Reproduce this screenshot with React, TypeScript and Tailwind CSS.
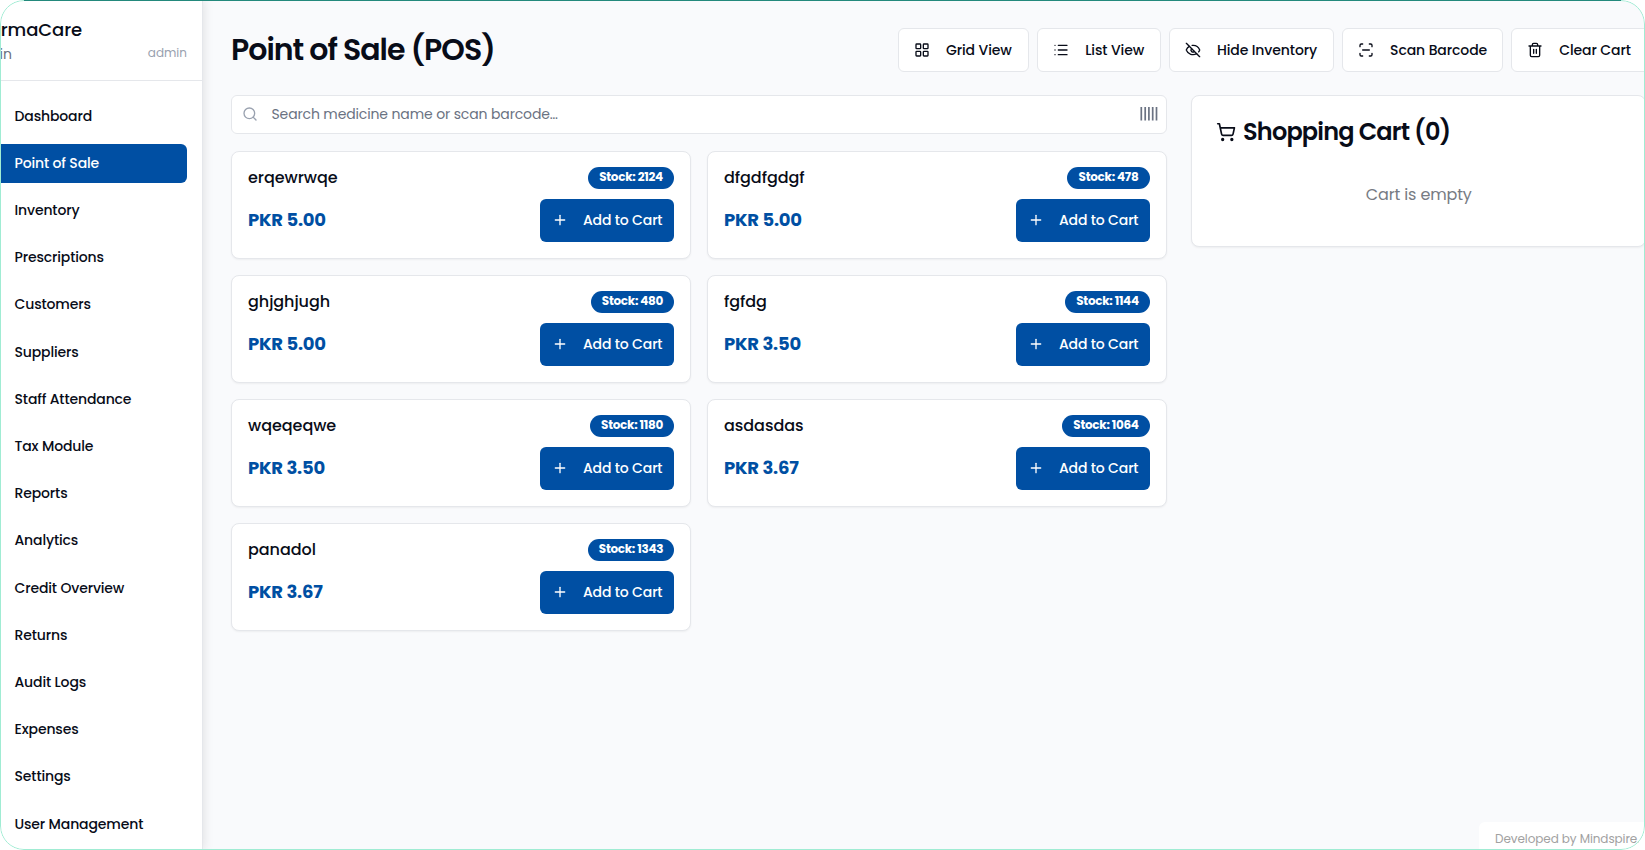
import React from "react";
import { LayoutGrid, List, EyeOff, Search, ShoppingCart, Plus } from "lucide-react";

const nav = [
  "Dashboard",
  "Point of Sale",
  "Inventory",
  "Prescriptions",
  "Customers",
  "Suppliers",
  "Staff Attendance",
  "Tax Module",
  "Reports",
  "Analytics",
  "Credit Overview",
  "Returns",
  "Audit Logs",
  "Expenses",
  "Settings",
  "User Management",
];

const products = [
  { name: "erqewrwqe", price: "5.00", stock: 2124, badge: "w-[86px]" },
  { name: "dfgdfgdgf", price: "5.00", stock: 478, badge: "w-[83px]" },
  { name: "ghjghjugh", price: "5.00", stock: 480, badge: "w-[83px]" },
  { name: "fgfdg", price: "3.50", stock: 1144, badge: "w-[85px]" },
  { name: "wqeqeqwe", price: "3.50", stock: 1180, badge: "w-[84px]" },
  { name: "asdasdas", price: "3.67", stock: 1064, badge: "w-[88px]" },
  { name: "panadol", price: "3.67", stock: 1343, badge: "w-[86px]" },
];

function ScanLine() {
  return (
    <svg width="16" height="16" viewBox="0 0 24 24" fill="none" stroke="currentColor" strokeWidth="2" strokeLinecap="round" strokeLinejoin="round">
      <path d="M3 7V5a2 2 0 0 1 2-2h2M17 3h2a2 2 0 0 1 2 2v2M21 17v2a2 2 0 0 1-2 2h-2M7 21H5a2 2 0 0 1-2-2v-2M7 12h10" />
    </svg>
  );
}

function TrashIcon() {
  return (
    <svg width="16" height="16" viewBox="0 0 24 24" fill="none" stroke="currentColor" strokeWidth="2" strokeLinecap="round" strokeLinejoin="round">
      <path d="M3 6h18M19 6v14a2 2 0 0 1-2 2H7a2 2 0 0 1-2-2V6M8 6V4a2 2 0 0 1 2-2h4a2 2 0 0 1 2 2v2M10 11v6M14 11v6" />
    </svg>
  );
}

function BarcodeBars() {
  return (
    <svg width="18" height="14" viewBox="0 0 18 14" fill="none" stroke="currentColor" strokeWidth="1.7" className="ml-auto text-gray-500">
      <path d="M1.3 0v13.5M5.2 0v13.5M8.9 0v13.5M12.7 0v13.5M16.5 0v13.5" />
    </svg>
  );
}

function ToolButton({ icon, label, width }: { icon: React.ReactNode; label: string; width: string }) {
  return (
    <button className={`flex h-[43.4px] shrink-0 items-center rounded-md border border-gray-200 bg-white pl-[15px] text-sm font-medium whitespace-nowrap ${width}`}>
      {icon}
      <span className="ml-4 tracking-[-0.1px]">{label}</span>
    </button>
  );
}

export default function App() {
  return (
    <div className="relative flex h-[850px] w-[1645px] overflow-hidden rounded-[24px] bg-[#f9fafc] font-['Poppins','Inter',sans-serif] text-[#080c18]">
      <aside className="z-10 flex w-[203px] shrink-0 flex-col border-r border-gray-200 bg-white shadow-[1px_0_10px_rgba(0,0,0,0.1)]">
        <header className="flex h-[81px] shrink-0 flex-col border-b border-gray-200 pt-[16px]">
          <div className="flex h-7 w-[82px] items-center justify-end text-lg font-medium tracking-[-0.1px]">rmaCare</div>
          <div className="flex h-5 items-center justify-between pr-[15px]">
            <span className="flex w-3 justify-end text-sm text-gray-500">in</span>
            <span className="pb-[2px] text-xs text-gray-400">admin</span>
          </div>
        </header>
        <nav className="flex flex-col gap-2 pt-[16px] pr-[15.5px]">
          {nav.map((label) => (
            <a
              key={label}
              className={`flex h-[39.2px] shrink-0 items-center rounded-r-md pb-[1.8px] pl-[14.5px] text-sm font-medium tracking-[-0.14px] ${label === "Point of Sale" ? "bg-[#004fa3] text-white" : ""}`}
            >
              {label}
            </a>
          ))}
        </nav>
      </aside>

      <main className="flex w-[1480px] shrink-0 flex-col pl-[28px]">
        <div className="flex pt-[28.3px]">
          <h1 className="flex h-[43px] w-[667px] items-center text-[30px] font-semibold tracking-[-1px] whitespace-nowrap">Point of Sale (POS)</h1>
          <div className="flex gap-[8.2px]">
            <ToolButton icon={<LayoutGrid size={16} />} label="Grid View" width="w-[131px]" />
            <ToolButton icon={<List size={16} />} label="List View" width="w-[123.5px]" />
            <ToolButton icon={<EyeOff size={16} />} label="Hide Inventory" width="w-[165px]" />
            <ToolButton icon={<ScanLine />} label="Scan Barcode" width="w-[161px]" />
            <ToolButton icon={<TrashIcon />} label="Clear Cart" width="w-[150px]" />
          </div>
        </div>

        <div className="mt-[23.3px] flex items-start gap-[23.5px]">
          <section className="w-[936px] shrink-0">
            <div className="flex h-[39px] items-center rounded-md border border-gray-200 bg-white pr-2 pl-[10px] text-gray-400">
              <Search size={16} />
              <span className="ml-[13.5px] pb-px text-sm tracking-[-0.13px] text-gray-500">Search medicine name or scan barcode…</span>
              <BarcodeBars />
            </div>
            <div className="mt-[17px] grid grid-cols-2 gap-4">
              {products.map((p) => (
                <article key={p.name} className="h-[108px] rounded-lg border border-gray-200 bg-white px-4 pt-[15px] shadow-xs">
                  <div className="flex h-[22px] items-center justify-between">
                    <h3 className="pt-px text-base font-medium tracking-[-0.05px]">{p.name}</h3>
                    <span className={`flex h-[22px] items-center justify-center rounded-full bg-[#004fa3] pb-px text-xs font-bold tracking-[-0.3px] text-white ${p.badge}`}>Stock: {p.stock}</span>
                  </div>
                  <div className="mt-[10px] flex h-[43px] items-center justify-between">
                    <span className="pb-px text-lg font-bold tracking-[-0.22px] text-[#004fa3]">PKR {p.price}</span>
                    <button className="flex h-[43.5px] w-[134.5px] items-center rounded-md bg-[#004fa3] pl-3 text-sm font-medium text-white">
                      <Plus size={16} />
                      <span className="ml-[15.5px] tracking-[-0.15px]">Add to Cart</span>
                    </button>
                  </div>
                </article>
              ))}
            </div>
          </section>
          <section className="h-[152px] w-[455px] shrink-0 rounded-lg border border-gray-200 bg-white pt-5 pl-[24.5px] shadow-xs">
            <h2 className="flex h-8 items-center gap-[7px] text-2xl font-semibold tracking-[-0.8px]">
              <ShoppingCart size={20} />
              Shopping Cart (0)
            </h2>
            <p className="mt-[35px] pr-[23px] text-center text-base tracking-[-0.15px] text-[#777b83]">Cart is empty</p>
          </section>
        </div>
      </main>

      <div className="absolute right-0 bottom-0 flex h-7 w-[166px] items-center rounded-tl-md bg-white pt-[5px] pl-4 text-xs tracking-[-0.08px] whitespace-nowrap text-neutral-400">Developed by Mindspire.</div>
      <div className="pointer-events-none absolute inset-0 z-20 rounded-[24px] border-[1.5px] border-[#a0ecd3]" />
      <div className="absolute top-0 right-6 left-6 z-30 h-px bg-[#23897c]" />
    </div>
  );
}
